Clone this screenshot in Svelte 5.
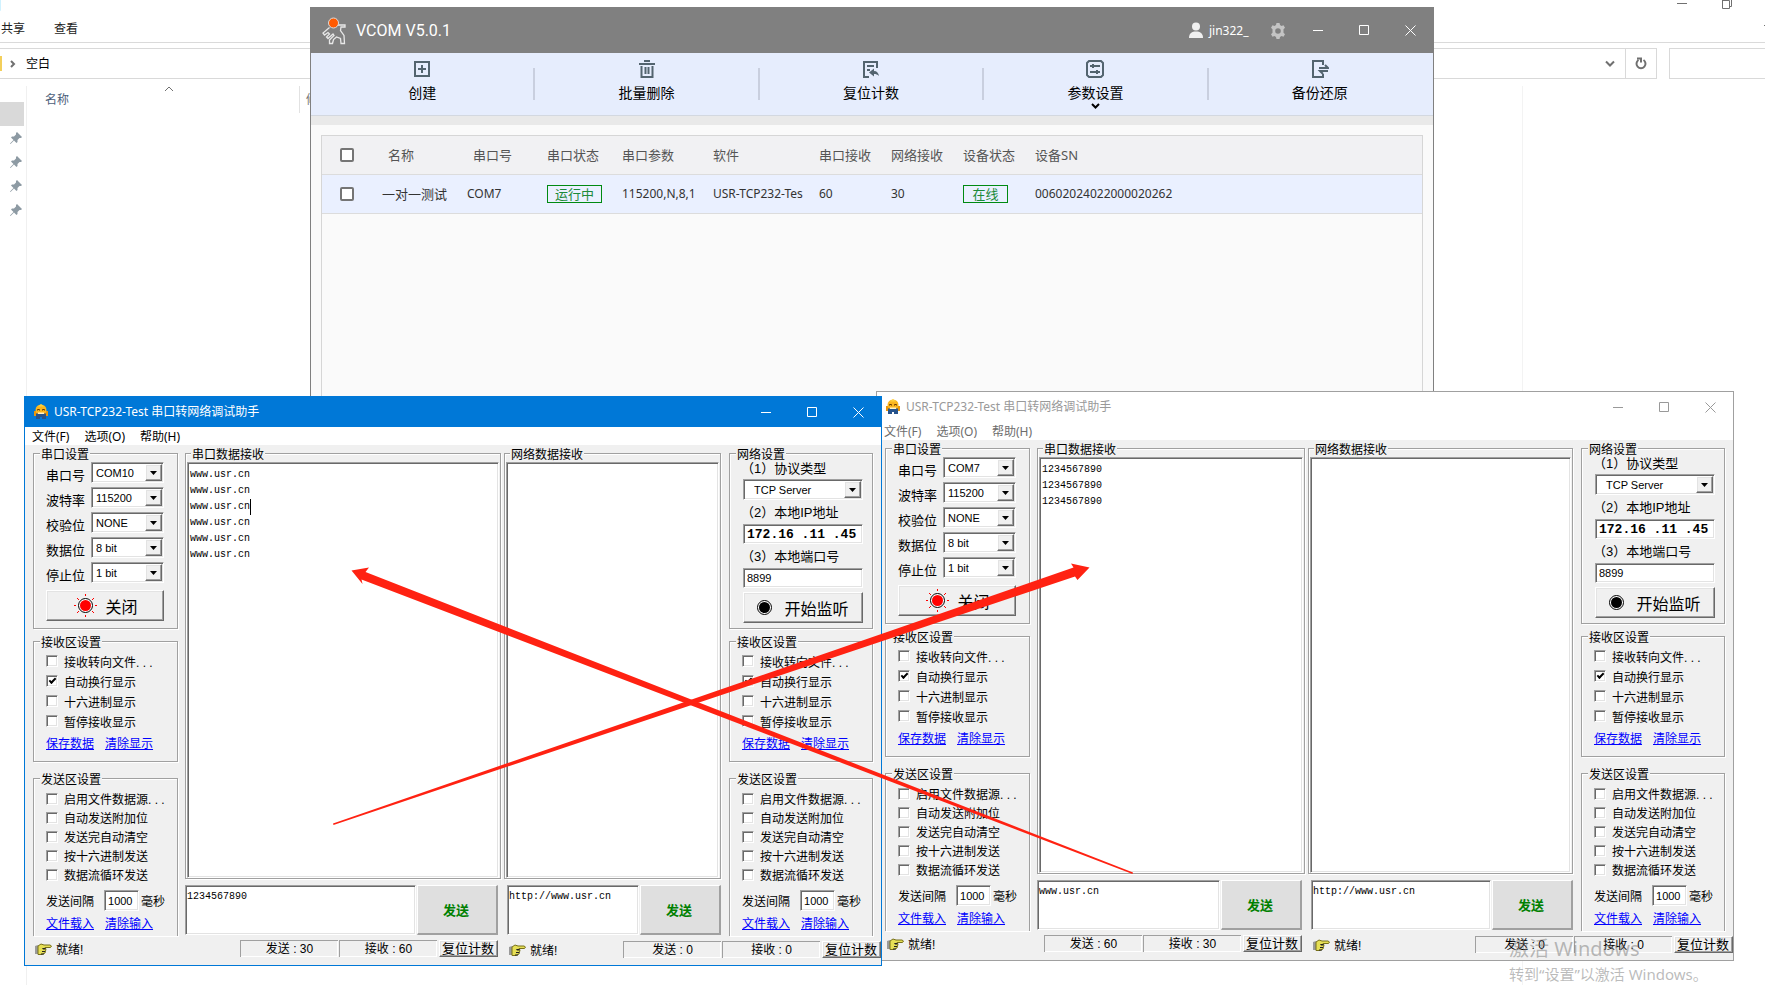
<script>
  const tools = [
    { id: "create", text: "创建" },
    { id: "delete", text: "批量删除" },
    { id: "reset", text: "复位计数" },
    { id: "params", text: "参数设置" },
    { id: "backup", text: "备份还原" },
  ];

  const testers = [
    {
      id: "a",
      active: true,
      netWidth: 217,
      port: "COM10",
      received: ["www.usr.cn", "www.usr.cn", "www.usr.cn", "www.usr.cn", "www.usr.cn", "www.usr.cn"],
      caretLine: 2,
      send: "1234567890",
      sent: 30,
      got: 60,
    },
    {
      id: "b",
      active: false,
      netWidth: 265,
      port: "COM7",
      received: ["1234567890", "1234567890", "1234567890"],
      caretLine: -1,
      send: "www.usr.cn",
      sent: 60,
      got: 30,
    },
  ];

  const netSend = "http://www.usr.cn";

  const receiveOptions = [
    { text: "接收转向文件. . .", checked: false },
    { text: "自动换行显示", checked: true },
    { text: "十六进制显示", checked: false },
    { text: "暂停接收显示", checked: false },
  ];

  const sendOptions = [
    "启用文件数据源. . .",
    "自动发送附加位",
    "发送完自动清空",
    "按十六进制发送",
    "数据流循环发送",
  ];

  function serialFields(port) {
    return [
      { id: "port", label: "串口号", value: port },
      { id: "baud", label: "波特率", value: "115200" },
      { id: "parity", label: "校验位", value: "NONE" },
      { id: "data", label: "数据位", value: "8 bit" },
      { id: "stop", label: "停止位", value: "1 bit" },
    ];
  }
</script>

{#snippet windowButtons()}
  <div class="controls">
    <button aria-label="最小化"><svg width="11" height="11" viewBox="0 0 11 11"><path d="M0 5.5h10" /></svg></button>
    <button aria-label="最大化"><svg width="11" height="11" viewBox="0 0 11 11"><path d="M.5.5h9v9h-9z" /></svg></button>
    <button aria-label="关闭"><svg width="11" height="11" viewBox="0 0 11 11"><path d="M.5.5l10 10M10.5.5l-10 10" /></svg></button>
  </div>
{/snippet}

{#snippet dropdown(id, value, indent)}
  <span class="combo sunken">
    <select {id} class:indent><option>{value}</option></select>
    <span class="arrow raised"><svg width="7" height="4" viewBox="0 0 7 4"><path d="M0 0h7L3.5 4z" /></svg></span>
  </span>
{/snippet}

{#snippet lamp(on)}
  <svg class="lamp" width="23" height="23" viewBox="0 0 23 23">
    {#if on}
      <path d="M11.5 0v2M11.5 21v2M0 11.5h2M21 11.5h2M3 4l2 2M18 17l2 2M20 4l-2 2M5 17l-2 2" stroke="#f00" />
    {/if}
    <circle cx="11.5" cy="11.5" r="7" fill="#fff" stroke="#000" />
    <circle cx="11.5" cy="11.5" r="5.5" fill={on ? "#f00" : "#000"} />
  </svg>
{/snippet}

{#snippet hand()}
  <svg class="hand" width="17" height="13" viewBox="0 0 17 13">
    <path d="M0 3l3-1v9H0z" fill="#9a9a9a" />
    <path d="M3 3l3-2 3 1h6l1.500 1-1 1.500H10l1 1.500-1 4-3 1.500H3z" fill="#e6df55" stroke="#77701a" />
    <path d="M7 5h3.500v1.500H8zM7 8h3v1H7zM6 10.500h3v1H6z" fill="#222" />
  </svg>
{/snippet}

{#snippet transferGroups(prefix)}
  <fieldset class="receive">
    <legend>接收区设置</legend>
    {#each receiveOptions as opt, i}
      <label class="check"><input type="checkbox" checked={opt.checked} id="{prefix}-r{i}" />{opt.text}</label>
    {/each}
    <div class="links"><a href="#save">保存数据</a><a href="#clear">清除显示</a></div>
  </fieldset>
  <fieldset class="send">
    <legend>发送区设置</legend>
    {#each sendOptions as text, i}
      <label class="check"><input type="checkbox" id="{prefix}-s{i}" />{text}</label>
    {/each}
    <div class="interval">
      <label for="{prefix}-ms">发送间隔</label>
      <input class="sunken" id="{prefix}-ms" value="1000" />
      <span>毫秒</span>
    </div>
    <div class="links"><a href="#load">文件载入</a><a href="#empty">清除输入</a></div>
  </fieldset>
{/snippet}

{#snippet status(sent, got)}
  {@render hand()}
  <span class="ready">就绪!</span>
  <span class="count">发送 : {sent}</span>
  <span class="count">接收 : {got}</span>
  <button class="reset raised">复位计数</button>
{/snippet}

<div class="desktop">
  <div class="explorer">
    <div class="caption">
      <span class="clipped">日</span>
      <svg width="82" height="13" viewBox="0 0 82 13"><path d="M0 3.500h10M45.500 0v8.500h7V.5h-7M54.500 0v6.500h-2" /></svg>
    </div>
    <div class="ribbon">
      <a href="#share">共享</a>
      <a href="#view">查看</a>
      <svg width="10" height="8" viewBox="0 0 10 8"><path d="M1 1l4 4 4-4" /></svg>
    </div>
    <div class="location">
      <div class="path">
        <i class="folder"></i>
        <svg width="6" height="8" viewBox="0 0 6 8"><path d="M1 1l3 3-3 3" stroke-width="2" /></svg>
        <span>空白</span>
        <svg class="down" width="10" height="8" viewBox="0 0 10 8"><path d="M1 1.500l4 4 4-4" stroke-width="2" /></svg>
      </div>
      <button class="refresh" aria-label="刷新">
        <svg width="12" height="13" viewBox="0 0 12 13"><path d="M8.500 3a4.500 4.500 0 1 1-5 0M2 1.500h4v4" stroke-width="2" /></svg>
      </button>
      <input class="search" aria-label="搜索" />
    </div>
    <div class="files">
      <div class="nav">
        <i class="current"></i>
        {#each [1, 2, 3, 4] as pin (pin)}
          <svg width="12" height="12" viewBox="0 0 12 12"><path d="M7 0l5 5-1 1H9.500L7.500 8v2l-1 1L4 8.500.5 12 0 11.500 3.500 8 1 5.500l1-1h2l2-2V1z" /></svg>
        {/each}
      </div>
      <div class="names">
        <span>名称</span>
        <svg width="10" height="6" viewBox="0 0 10 6"><path d="M1 5l4-4 4 4" /></svg>
      </div>
      <div class="modified">修改日期</div>
      <div class="preview"></div>
    </div>
  </div>

  <div class="vcom">
    <header>
      <svg width="27" height="28" viewBox="0 0 27 28">
        <path d="M8.500 10.500L2 16l1.500 2L7 15.500 8.500 17 5.500 20l1.500 1.500L12 17l1 1.500L8.500 23v3.500h3l1-4 3-2.500 4 1.500.5 5h3.500l-.5-8-3.500-5 .5-3.500h4V8h-8" fill="none" stroke="#e8e8e8" stroke-width="1.300" />
        <circle cx="12.500" cy="6" r="5" fill="#ff5a00" stroke="#ddd" stroke-width="1" />
      </svg>
      <h1>VCOM V5.0.1</h1>
      <svg width="14" height="17" viewBox="0 0 14 17"><circle cx="7" cy="4.500" r="4" fill="#f0f0f0" /><path d="M0 16c0-5 3-6.500 7-6.500S14 11 14 16z" fill="#f0f0f0" /></svg>
      <span class="user">jin322_</span>
      <button class="gear" aria-label="设置">
        <svg width="16" height="16" viewBox="0 0 16 16"><path fill-rule="evenodd" d="M6.500 0h3l.5 2 1.500.9 2-.7L15 4.800 13.500 6.300v3.400L15 11.200l-1.500 2.600-2-.7-1.500.9-.5 2h-3L6 14l-1.500-.9-2 .7L1 11.200l1.500-1.500V6.300L1 4.800l1.500-2.600 2 .7L6 2zM8 5.200a2.800 2.800 0 1 0 0 5.600 2.800 2.800 0 0 0 0-5.600z" fill="#c4c4c4" /></svg>
      </button>
      {@render windowButtons()}
    </header>
    <nav>
      {#each tools as tool (tool.id)}
        <button class="tool">
          <svg width="18" height="18" viewBox="0 0 18 18">
            {#if tool.id === "create"}
              <path d="M2 2h14v14H2zM9 5v8M5 9h8" />
            {:else if tool.id === "delete"}
              <path d="M1 4h16M6 1h6M3.500 6v11h11V6M7.500 7v7M10.500 7v7" />
            {:else if tool.id === "reset"}
              <path d="M7 17H2V2h13v6M5 6h7M5 10h3" /><path d="M7 12.500l5-4v2.500c3 0 4.500 2 5 5-1.500-1.500-3-2-5-2v2.500z" class="solid" />
            {:else if tool.id === "params"}
              <path d="M3 1h12l2 2v12l-2 2H3l-2-2V3zM4 6h10M4 12h10M7 4v4M11 10v4" />
            {:else}
              <path d="M12 5V1H2v16h10v-3M8 8h9l-3-3M17 11H9l3 3" />
            {/if}
          </svg>
          <span>{tool.text}</span>
          {#if tool.id === "params"}
            <svg class="more" width="9" height="6" viewBox="0 0 9 6"><path d="M1 1l3.500 3.500L8 1" /></svg>
          {/if}
        </button>
      {/each}
    </nav>
    <div class="band"></div>
    <div class="devices">
      <table>
        <thead>
          <tr>
            <th class="tick"><input type="checkbox" aria-label="全选" /></th>
            <th class="name">名称</th>
            <th class="port">串口号</th>
            <th class="state">串口状态</th>
            <th class="config">串口参数</th>
            <th class="app">软件</th>
            <th class="num">串口接收</th>
            <th class="num">网络接收</th>
            <th class="num">设备状态</th>
            <th>设备SN</th>
          </tr>
        </thead>
        <tbody>
          <tr>
            <td class="tick"><input type="checkbox" aria-label="一对一测试" /></td>
            <td>一对一测试</td>
            <td>COM7</td>
            <td class="tag"><span class="badge">运行中</span></td>
            <td>115200,N,8,1</td>
            <td>USR-TCP232-Tes</td>
            <td>60</td>
            <td>30</td>
            <td class="tag"><span class="badge short">在线</span></td>
            <td>00602024022000020262</td>
          </tr>
        </tbody>
      </table>
    </div>
  </div>

  {#each testers as t (t.id)}
    <section class="tester {t.id}" class:active={t.active}>
      <header>
        <svg width="16" height="16" viewBox="0 0 16 16">
          <path d="M1 7h14v5H1z" fill="#e8960c" />
          <circle cx="8" cy="6" r="5.500" fill="#fbb61e" />
          <path d="M5 2.500h6L8 0z" fill="#ffd23e" />
          <path d="M4.500 6.500v-1h2v1M9.500 6.500v-1h2v1" fill="none" stroke="#6b3a00" />
          <path d="M3 9.500h10V15H9v-2H7v2H3z" fill="#27538c" />
          <path d="M5 8.500h6V10H5z" fill="#fff3c4" />
        </svg>
        <h2>USR-TCP232-Test 串口转网络调试助手</h2>
        {@render windowButtons()}
      </header>
      <div class="menu">
        <button>文件(F)</button>
        <button>选项(O)</button>
        <button>帮助(H)</button>
      </div>
      <div class="body">
        <div class="side">
          <fieldset class="serial">
            <legend>串口设置</legend>
            {#each serialFields(t.port) as f (f.id)}
              <div class="field">
                <label for="{t.id}-{f.id}">{f.label}</label>
                {@render dropdown(`${t.id}-${f.id}`, f.value, false)}
              </div>
            {/each}
            <button class="big raised">{@render lamp(true)}关闭</button>
          </fieldset>
          {@render transferGroups(t.id + "l")}
        </div>
        <div class="pane serial-pane">
          <fieldset>
            <legend>串口数据接收</legend>
            <div class="log sunken">
              {#each t.received as line, i}
                <p class:caret={i === t.caretLine}>{line}</p>
              {/each}
            </div>
          </fieldset>
          <div class="sender">
            <textarea class="sunken" aria-label="串口发送" value={t.send}></textarea>
            <button>发送</button>
          </div>
        </div>
        <div class="pane net-pane" style="width: {t.netWidth}px">
          <fieldset>
            <legend>网络数据接收</legend>
            <div class="log sunken"></div>
          </fieldset>
          <div class="sender">
            <textarea class="sunken" aria-label="网络发送" value={netSend}></textarea>
            <button>发送</button>
          </div>
        </div>
        <div class="side right">
          <fieldset class="network">
            <legend>网络设置</legend>
            <label for="{t.id}-proto">（1）协议类型</label>
            {@render dropdown(`${t.id}-proto`, "TCP Server", true)}
            <label for="{t.id}-ip">（2）本地IP地址</label>
            <input class="sunken ip" id="{t.id}-ip" value="172.16 .11 .45" />
            <label for="{t.id}-local">（3）本地端口号</label>
            <input class="sunken" id="{t.id}-local" value="8899" />
            <button class="big raised">{@render lamp(false)}开始监听</button>
          </fieldset>
          {@render transferGroups(t.id + "r")}
        </div>
      </div>
      <footer>
        <div class="status">{@render status(t.sent, t.got)}</div>
        <div class="status net" style="width: {t.netWidth + 160}px">{@render status(0, 0)}</div>
      </footer>
    </section>
  {/each}

  <svg class="arrows" width="1765" height="985" viewBox="0 0 1765 985">
    <path d="M351.500 570.500L369 567.500l-3.500 4.500L1133 872.500l-.5 1.500L361.500 579.500l1 4.500z" />
    <path d="M1089.500 567.500L1071 563.500l2.500 4L333 823.500l.5 1.500L1075 576.500l2.500 3.500z" />
  </svg>

  <div class="watermark">
    <p class="large">激活 Windows</p>
    <p>转到“设置”以激活 Windows。</p>
  </div>
</div>

<style>
  :global(body) {
    background: #fff;
  }
  .desktop {
    position: relative;
    min-height: 100vh;
    overflow: hidden;
    display: flex;
    font-family: "Noto Sans", "Noto Sans CJK SC", sans-serif;
    font-size: 12px;
    color: #000;
  }
  button,
  input,
  select,
  textarea {
    font: inherit;
    color: inherit;
    margin: 0;
    padding: 0;
    border: 0;
    background: none;
    border-radius: 0;
    box-sizing: border-box;
    appearance: none;
  }
  a {
    color: inherit;
    text-decoration: none;
  }
  p,
  h1,
  h2 {
    margin: 0;
    font-weight: normal;
  }
  svg {
    flex: none;
  }

  /* explorer window in the background */
  .explorer {
    flex: 1;
    display: flex;
    flex-direction: column;
  }
  .explorer svg {
    fill: none;
    stroke: #707070;
  }
  .caption {
    height: 14px;
    display: flex;
    justify-content: space-between;
    padding-right: 6px;
    overflow: hidden;
    color: #777;
  }
  .clipped {
    width: 2px;
    line-height: 12px;
    direction: rtl;
    overflow: hidden;
  }
  .ribbon {
    display: flex;
    align-items: center;
    gap: 29px;
    height: 28px;
    padding-left: 1px;
    border-bottom: 1px solid #dadada;
    color: #222;
  }
  .ribbon svg {
    margin: 0 -8px 0 auto;
  }
  .location {
    display: flex;
    height: 31px;
    margin-top: 5px;
  }
  .path {
    flex: 1;
    display: flex;
    align-items: center;
    border: 1px solid #d9d9d9;
    border-left: 0;
  }
  .folder {
    width: 2px;
    height: 15px;
    margin-right: 8px;
    background: #f3cf5b;
  }
  .path span {
    margin: 0 0 2px 10px;
  }
  .path .down {
    margin: 0 10px 0 auto;
  }
  .refresh {
    display: grid;
    place-items: center;
    width: 31px;
    border: 1px solid #d9d9d9;
    border-left: 0;
  }
  .search {
    width: 96px;
    margin-left: 12px;
    border: 1px solid #d9d9d9;
    border-right: 0;
  }
  .files {
    flex: 1;
    display: flex;
    padding-top: 7px;
  }
  .nav {
    width: 26px;
    display: flex;
    flex-direction: column;
    gap: 12px;
    align-items: flex-end;
    border-right: 1px solid #f0f0f0;
  }
  .nav svg {
    fill: #8d9aa3;
    stroke: none;
    margin-right: 4px;
  }
  .current {
    width: 24px;
    height: 24px;
    margin: 16px 2px -6px 0;
    background: #d9d9d9;
  }
  .names {
    display: flex;
    gap: 95px;
    width: 273px;
    height: 27px;
    padding-left: 18px;
    box-sizing: border-box;
    border-right: 1px solid #e2e2e2;
    color: #4c607a;
    line-height: 27px;
  }
  .modified {
    flex: 1;
    padding-left: 6px;
    line-height: 27px;
    color: #777;
  }
  .preview {
    width: 242px;
    border-left: 1px solid #f3f3f3;
  }

  /* VCOM manager */
  .vcom {
    position: absolute;
    left: 310px;
    top: 7px;
    width: 1124px;
    height: 420px;
    box-sizing: border-box;
    display: flex;
    flex-direction: column;
    border: 1px solid #808080;
    background: #fafafa;
  }
  .vcom header {
    display: flex;
    align-items: center;
    height: 45px;
    padding-left: 10px;
    background: #808080;
    color: #fff;
  }
  .vcom h1 {
    flex: 1;
    margin-left: 8px;
    font: 16px/20px Roboto, sans-serif;
  }
  .user {
    width: 61px;
    margin-left: 6px;
  }
  .gear {
    width: 16px;
    height: 16px;
    margin-right: 9px;
  }
  .gear svg {
    display: block;
  }
  .controls {
    display: flex;
  }
  .controls button {
    display: grid;
    place-items: center;
    width: 46px;
    height: 30px;
  }
  .controls svg {
    fill: none;
    stroke: currentColor;
  }
  .vcom nav {
    display: flex;
    height: 62px;
    background: #e6edfd;
    border-bottom: 1px solid #d3d8e0;
  }
  .tool {
    flex: 1;
    display: flex;
    flex-direction: column;
    align-items: center;
    padding: 7px 2px 0 0;
    background: linear-gradient(#c9cfdf, #c9cfdf) right 15px / 2px 32px no-repeat;
    font-size: 14px;
    line-height: 20px;
  }
  .tool:last-child {
    background: none;
  }
  .tool span {
    margin-top: 5px;
  }
  .tool svg {
    fill: none;
    stroke: #53646f;
    stroke-width: 2px;
  }
  .tool .solid {
    fill: #53646f;
    stroke: none;
  }
  .tool svg.more {
    stroke: #000;
  }
  .band {
    height: 9px;
    background: #e9e9e9;
  }
  .devices {
    flex: 1;
    margin: 10px 10px 0;
    border: 1px solid #d6d6d6;
  }
  table {
    width: 100%;
    table-layout: fixed;
    border-collapse: collapse;
    color: #333;
  }
  th,
  td {
    height: 36px;
    padding: 0 0 2px;
    border-bottom: 1px solid #dcdcdc;
    text-align: left;
    white-space: nowrap;
  }
  thead tr {
    background: #f1f1f3;
  }
  tbody tr {
    background: #eaf0ff;
  }
  th {
    font-size: 13px;
    font-weight: normal;
    color: #555;
  }
  .tick {
    width: 42px;
    padding: 0 0 0 18px;
  }
  .tag {
    padding: 0;
  }
  .tick input {
    display: block;
    width: 14px;
    height: 14px;
    border: 2px solid #757575;
    border-radius: 2px;
    background: #fff;
  }
  th.name {
    width: 79px;
    padding-left: 6px;
  }
  th.port {
    width: 74px;
    padding-left: 6px;
  }
  th.state {
    width: 75px;
  }
  th.config {
    width: 91px;
  }
  th.app {
    width: 106px;
  }
  th.num {
    width: 72px;
  }
  td:nth-child(2) {
    font-size: 13px;
  }
  .badge {
    display: block;
    width: 53px;
    border: 1px solid #008a12;
    color: #1c8a3a;
    font-size: 13px;
    line-height: 16px;
    text-align: center;
  }
  .badge.short {
    width: 43px;
  }

  /* TCP232 test windows */
  .tester {
    position: absolute;
    width: 858px;
    box-sizing: border-box;
    border: 1px solid #a0a0a0;
    background: #f0f0f0;
    font-family: "Liberation Sans", "Noto Sans CJK SC", sans-serif;
  }
  .tester.active {
    border-color: #0078d7;
  }
  .a {
    left: 24px;
    top: 396px;
    z-index: 1;
  }
  .b {
    left: 876px;
    top: 391px;
  }
  .tester header {
    display: flex;
    align-items: center;
    height: 30px;
    padding-left: 8px;
    background: #fff;
    color: #999;
    font-family: "Noto Sans", "Noto Sans CJK SC", sans-serif;
  }
  .tester.active header {
    background: #0078d7;
    color: #fff;
  }
  h2 {
    flex: 1;
    margin-left: 5px;
    font-size: 12px;
    line-height: 20px;
  }
  .menu {
    display: flex;
    gap: 15px;
    height: 18px;
    padding-left: 7px;
    background: #fff;
    color: #6d6d6d;
    font-family: "Noto Sans", "Noto Sans CJK SC", sans-serif;
  }
  .menu button {
    height: 20px;
    line-height: 20px;
  }
  .active .menu {
    color: #000;
  }
  .body {
    display: flex;
    height: 490px;
    padding: 0 8px;
  }
  .side {
    width: 145px;
    margin-right: 7px;
  }
  .side.right {
    width: 144px;
    margin: 0 0 0 8px;
  }
  fieldset {
    min-width: 0;
    margin: 0;
    padding: 0;
    box-sizing: border-box;
    border: 1px solid #a0a0a0;
    box-shadow: 1px 1px #fff, inset 1px 1px #fff;
  }
  legend {
    height: 16px;
    margin-left: -6px;
    padding: 0 1px;
    background: #f0f0f0;
    line-height: 20px;
  }
  .serial {
    height: 184px;
    padding: 1px 13px 0 12px;
  }
  .field {
    display: flex;
    justify-content: space-between;
    height: 21px;
    margin-bottom: 4px;
  }
  .field label {
    padding-top: 4px;
    font-size: 13px;
    line-height: 20px;
  }
  .sunken {
    border: 1px solid;
    border-color: #a0a0a0 #fff #fff #a0a0a0;
    background: #fff;
    box-shadow: inset 1px 1px #696969, inset -1px -1px #e3e3e3;
  }
  .raised {
    border: 1px solid;
    border-color: #fff #696969 #696969 #fff;
    background: #f0f0f0;
    box-shadow: inset -1px -1px #a0a0a0, inset 1px 1px #e3e3e3;
  }
  .combo {
    display: flex;
    width: 73px;
    height: 21px;
    box-sizing: border-box;
    padding: 1px;
  }
  .combo select {
    flex: 1;
    min-width: 0;
    padding-left: 3px;
    font-size: 11px;
  }
  .combo select.indent {
    padding-left: 9px;
  }
  .arrow {
    display: grid;
    place-items: center;
    width: 15px;
  }
  .big {
    display: flex;
    align-items: center;
    justify-content: center;
    width: 118px;
    height: 31px;
    gap: 8px;
    font-size: 16px;
  }
  .serial .big {
    margin-top: 7px;
    padding-left: 2px;
  }
  .lamp {
    fill: none;
  }
  .network {
    height: 184px;
    padding: 0 9px 0 13px;
  }
  .network legend {
    margin-left: -7px;
  }
  .network label {
    display: block;
    height: 16px;
    margin: 5px 0 3px -2px;
    font-size: 13px;
    line-height: 16px;
  }
  .network label:first-of-type {
    margin-top: 0;
    height: 15px;
  }
  .network .combo,
  .network input {
    width: 120px;
  }
  .network input {
    display: block;
    height: 20px;
    padding: 0 3px;
    font-size: 11px;
  }
  .network .ip {
    font: bold 13px/18px "Liberation Mono", monospace;
  }
  .network .big {
    width: 120px;
    margin-top: 4px;
    padding-right: 4px;
  }
  .receive {
    height: 129px;
    margin-top: 4px;
    padding: 2px 0 0 12px;
  }
  .send {
    height: 166px;
    margin-top: 8px;
    padding: 3px 0 0 12px;
    border-bottom: 0;
  }
  .check {
    display: flex;
    align-items: center;
    gap: 6px;
    height: 20px;
    white-space: nowrap;
  }
  .send .check {
    height: 19px;
  }
  .check input {
    display: grid;
    place-items: center;
    width: 12px;
    height: 12px;
    border: 1px solid;
    border-color: #a0a0a0 #fff #fff #a0a0a0;
    background: #fff;
    box-shadow: inset 1px 1px #696969, inset -1px -1px #e3e3e3;
  }
  .check input:checked::before {
    content: "";
    width: 5px;
    height: 2px;
    margin-bottom: 2px;
    border: solid #000;
    border-width: 0 0 2px 2px;
    rotate: -45deg;
  }
  .links {
    display: flex;
    gap: 11px;
    margin-top: 5px;
    color: #00f;
    line-height: 16px;
  }
  .links a {
    text-decoration: underline;
  }
  .interval {
    display: flex;
    align-items: center;
    height: 21px;
    margin-top: 6px;
  }
  .interval input {
    width: 35px;
    height: 21px;
    margin: 0 2px 0 10px;
    padding-left: 3px;
    font-size: 11px;
  }
  .pane {
    display: flex;
    flex-direction: column;
    gap: 6px;
  }
  .serial-pane {
    flex: 1;
    margin-right: 3px;
  }
  .pane fieldset {
    flex: 1;
    display: flex;
    flex-direction: column;
    padding: 1px 1px 0;
  }
  .pane legend {
    margin-left: 4px;
  }
  .log {
    flex: 1;
    padding: 4px 2px;
    font: 10px/16px "Liberation Mono", monospace;
  }
  .log p {
    width: fit-content;
    border-right: 1px solid transparent;
  }
  .log .caret {
    border-color: #000;
  }
  .sender {
    display: flex;
    gap: 1px;
    height: 50px;
    padding-right: 3px;
  }
  .net-pane .sender {
    padding: 0 0 0 3px;
  }
  .sender textarea {
    flex: 1;
    min-width: 0;
    padding: 3px 1px;
    resize: none;
    font: 10px/16px "Liberation Mono", monospace;
  }
  .sender button {
    width: 81px;
    padding-right: 2px;
    border: solid;
    border-width: 1px 2px 2px 1px;
    border-color: #fff #a0a0a0 #a0a0a0 #fff;
    background: #dfdfdf;
    color: #008000;
    font-size: 13px;
    font-weight: bold;
  }
  footer {
    display: flex;
    height: 30px;
    overflow: hidden;
  }
  .status {
    flex: 1;
    display: flex;
    padding: 5px 6px 0 10px;
    line-height: 16px;
  }
  .status.net {
    flex: none;
    box-sizing: border-box;
    padding: 6px 0 0 5px;
  }
  .hand {
    margin-top: 3px;
  }
  .ready {
    margin: 2px auto 0 4px;
  }
  .count {
    width: 97px;
    height: 16px;
    margin-right: 1px;
    border: solid #a0a0a0;
    border-width: 1px 0 0 1px;
    box-shadow: inset -1px -1px #fff;
    text-align: center;
  }
  .reset {
    width: 59px;
    height: 17px;
    margin-left: 1px;
    font-size: 13px;
    line-height: 14px;
    text-align: left;
    white-space: nowrap;
    overflow: hidden;
    padding-left: 2px;
  }

  .arrows {
    position: absolute;
    left: 0;
    top: 0;
    z-index: 2;
    fill: #ff2212;
    pointer-events: none;
  }
  .watermark {
    position: absolute;
    left: 1509px;
    top: 936px;
    z-index: 3;
    color: rgba(120, 120, 120, 0.5);
    font-size: 15px;
    line-height: 24px;
    pointer-events: none;
    white-space: nowrap;
  }
  .watermark .large {
    font-size: 20px;
    line-height: 26px;
  }
</style>
